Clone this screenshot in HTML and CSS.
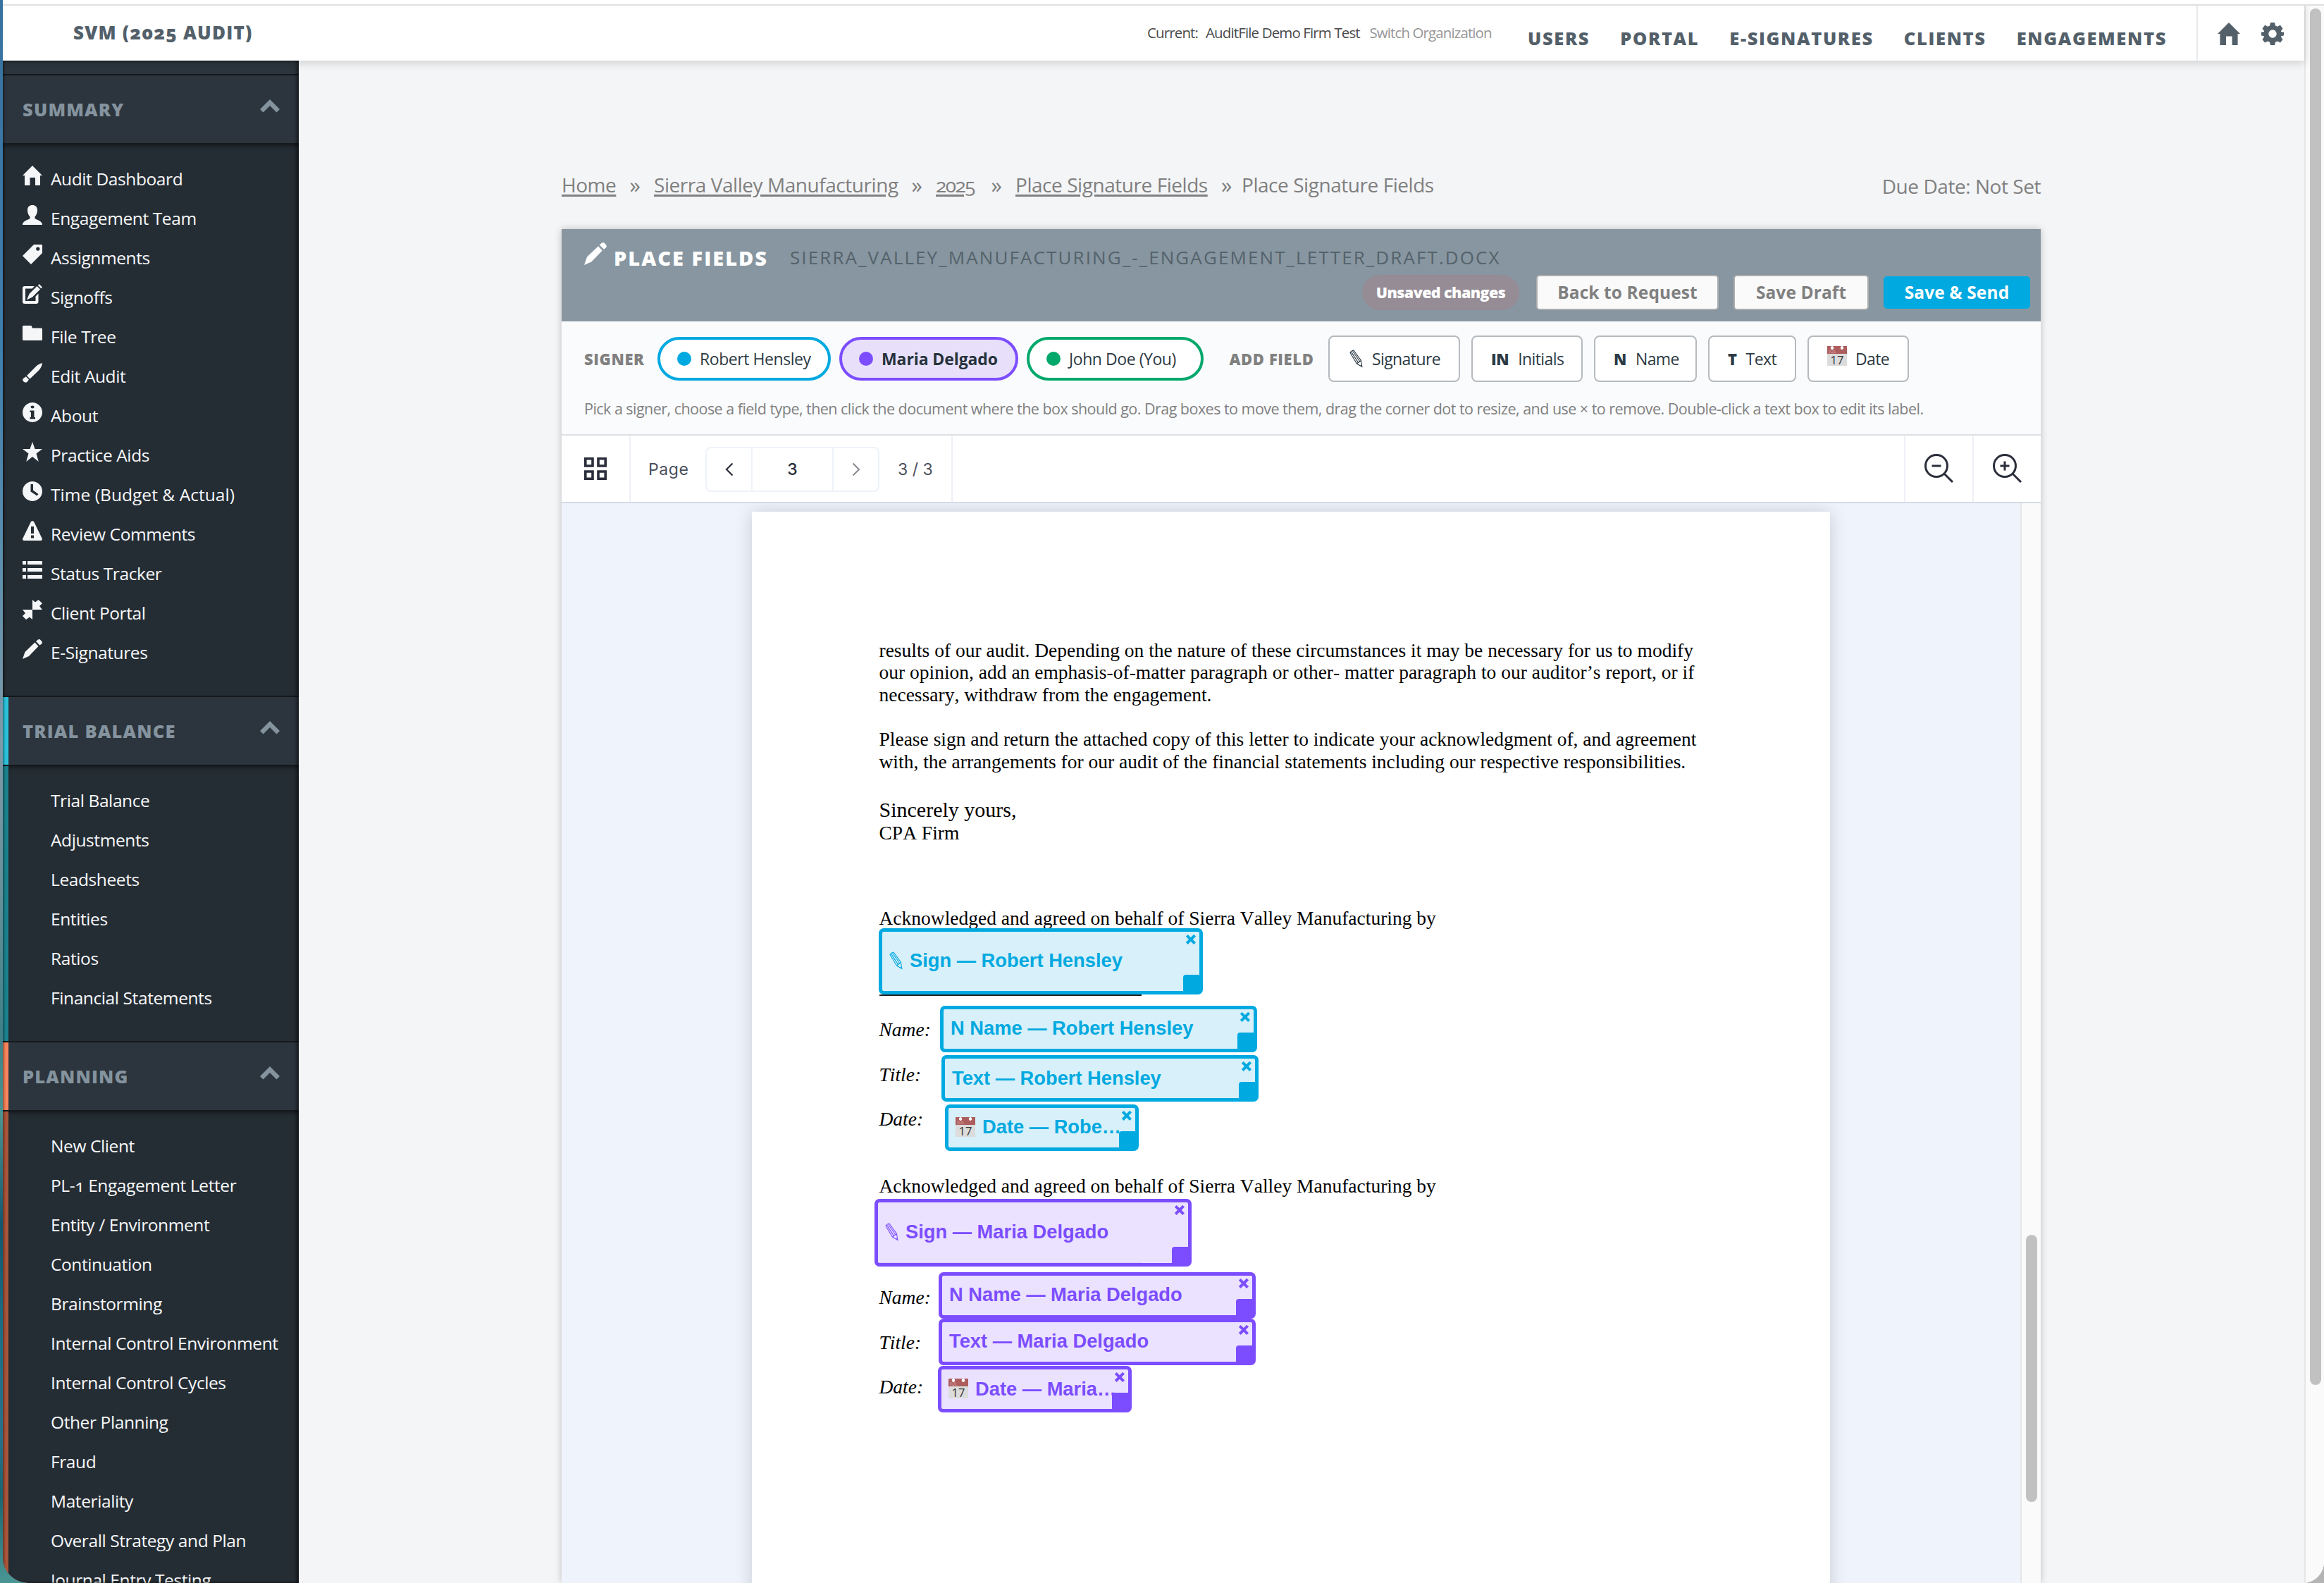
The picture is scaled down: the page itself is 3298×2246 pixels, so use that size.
FILE: index.html
```html
<!DOCTYPE html>
<html lang="en">
<head>
<meta charset="utf-8">
<title>Place Signature Fields</title>
<link rel="stylesheet" href="styles.css">
</head>
<body>
<svg class="defs" width="0" height="0">
  <symbol id="home" viewBox="0 0 28 28"><path d="M14 0 28 14H25V28H18V17H10.5V28H3V14H0Z"/></symbol>
  <symbol id="user" viewBox="0 0 28 28"><path d="M14 0c4 0 7 2.600 7 7 0 4-1.500 7.500-3.500 9.500v2.500c4 2.500 10.500 3.500 10.500 9H0c0-5.500 6.500-6.500 10.500-9v-2.500C8.500 14.500 7 11 7 7c0-4.400 3-7 7-7Z"/></symbol>
  <symbol id="tag" viewBox="0 0 28 28"><path fill-rule="evenodd" d="M16 0H27a1 1 0 0 1 1 1V12L12 28 0 16ZM21.800 3.400a2.700 2.700 0 1 0 .01 0Z"/></symbol>
  <symbol id="check" viewBox="0 0 28 28"><path d="M3 3H17L13.500 6.500H4V24H18.500V17.500L22.500 13.500V25a3 3 0 0 1-3 3H3a3 3 0 0 1-3-3V6A3 3 0 0 1 3 3Z"/><path d="M6 22.500 9.500 14 20.500 3 25 7.500 14 18.500ZM21.800 1.800 23.600 0 28 4.500 26.200 6.200Z"/></symbol>
  <symbol id="folder" viewBox="0 0 28 28"><path d="M1.500 3H12.500L14 6.500H26.500A1.500 1.500 0 0 1 28 8V22.500A1.500 1.500 0 0 1 26.500 24H1.500A1.500 1.500 0 0 1 0 22.500V4.500A1.500 1.500 0 0 1 1.500 3Z"/></symbol>
  <symbol id="brush" viewBox="0 0 28 28"><path d="M28 0C27.500 4 26 7 23.500 10L10.500 22.500 6 18 19 5C22 2 25 1 28 0ZM4.800 19.200 9 23.500 6.500 27Q4 28.500 1.500 26.500 -.5 24.500 .5 22.500Z"/></symbol>
  <symbol id="info" viewBox="0 0 28 28"><path fill-rule="evenodd" d="M14 0a14 14 0 1 0 .01 0ZM11.500 6q0-1.500 2.700-1.500T16.500 6.500q0 2-2.400 2T11.500 6ZM10.500 11.500H16.500V21H18V23.500H10.500V21H12V14H10.500Z"/></symbol>
  <symbol id="star" viewBox="0 0 28 28"><path d="M14 0 17.500 10H28L19.500 16.500 22.800 28 14 21 5.200 28 8.500 16.500 0 10H10.500Z"/></symbol>
  <symbol id="clock" viewBox="0 0 28 28"><path fill-rule="evenodd" d="M14 0a14 14 0 1 0 .01 0ZM11.500 4H15V12.500L22.500 18 20.500 20.500 11.500 14.500Z"/></symbol>
  <symbol id="warn" viewBox="0 0 28 28"><path fill-rule="evenodd" d="M14 0Q15.500 0 16.500 2L27.700 25Q28.500 28 26 28H2Q-.5 28 .3 25L11.500 2Q12.500 0 14 0ZM12 8V18H16V8ZM12 20.500V24.500H16V20.500Z"/></symbol>
  <symbol id="list" viewBox="0 0 28 28"><path d="M0 1H5V6H0ZM7 1H28V6H7ZM0 11H5V16H0ZM7 11H28V16H7ZM0 21H5V26H0ZM7 21H28V26H7Z"/></symbol>
  <symbol id="shrink" viewBox="0 0 28 28"><path d="M14 0 18 3.500 22.500 0 28 5 24 9 28 14H14ZM0 14H14V28L10 24.500 5 28 0 23 4 19Z"/></symbol>
  <symbol id="pencil" viewBox="0 0 28 28"><path d="M0 28 3.500 18 17.500 4.500 22.500 10 9 24ZM19 3 22 .5Q24-.7 26 1.500L27.500 3.500Q28.500 5 27 6.500L24.500 8.500Z"/></symbol>
  <symbol id="up" viewBox="0 0 28 19"><path d="M14 0 28 14 23.500 18.500 14 9 4.500 18.500 0 14Z"/></symbol>
  <symbol id="gear" viewBox="0 0 32 32"><path fill-rule="evenodd" d="M13 0H19L20 4.500 23 5.700 26.800 3.500 30.500 8.500 28 12V13L32 13.800V18.200L28 19.500V20.500L30.500 24 27 28.500 23 26.500 20 27.700 19 32H13L12 27.700 9 26.500 5 28.500 1.500 24 4 20.500V19.500L0 18.200V13.800L4 13V12L1.500 8.500 5.200 3.500 9 5.700 12 4.500ZM16 10.300a5.700 5.700 0 1 0 .01 0Z"/></symbol>
  <symbol id="outline-pencil" viewBox="0 0 20 26"><path d="M1 4.500Q2.500 1.500 6 1L16.500 15.500 17.800 24.500 10.500 20ZM2.800 3.600 12.600 18.600M4.600 2.200 14.700 16.800M10.500 20 16.500 15.500M15.800 23.200 17.500 21.800" fill="none" stroke="currentColor" stroke-width="1.100"/></symbol>
</svg>

<div class="window">
  <header class="topbar">
    <div class="brand">SVM (2025 AUDIT)</div>
    <div class="org"><span>Current:</span><span>AuditFile Demo Firm Test</span><a>Switch Organization</a></div>
    <nav class="nav"><a>USERS</a><a>PORTAL</a><a>E-SIGNATURES</a><a>CLIENTS</a><a>ENGAGEMENTS</a></nav>
    <div class="quick"><svg><use href="#home"/></svg><svg><use href="#gear"/></svg></div>
  </header>

  <div class="body">
    <aside class="sidebar">
      <div class="stub"></div>
      <section class="group">
        <h2>SUMMARY<svg><use href="#up"/></svg></h2>
        <ul class="icons">
          <li><svg><use href="#home"/></svg>Audit Dashboard</li>
          <li><svg><use href="#user"/></svg>Engagement Team</li>
          <li><svg><use href="#tag"/></svg>Assignments</li>
          <li><svg><use href="#check"/></svg>Signoffs</li>
          <li><svg><use href="#folder"/></svg>File Tree</li>
          <li><svg><use href="#brush"/></svg>Edit Audit</li>
          <li><svg><use href="#info"/></svg>About</li>
          <li><svg><use href="#star"/></svg>Practice Aids</li>
          <li class="wide"><svg><use href="#clock"/></svg>Time (Budget &amp; Actual)</li>
          <li><svg><use href="#warn"/></svg>Review Comments</li>
          <li><svg><use href="#list"/></svg>Status Tracker</li>
          <li><svg><use href="#shrink"/></svg>Client Portal</li>
          <li><svg><use href="#pencil"/></svg>E-Signatures</li>
        </ul>
      </section>
      <section class="group trial">
        <h2>TRIAL BALANCE<svg><use href="#up"/></svg></h2>
        <ul>
          <li>Trial Balance</li><li>Adjustments</li><li>Leadsheets</li><li>Entities</li><li>Ratios</li><li>Financial Statements</li>
        </ul>
      </section>
      <section class="group planning">
        <h2>PLANNING<svg><use href="#up"/></svg></h2>
        <ul>
          <li>New Client</li><li>PL-1 Engagement Letter</li><li>Entity / Environment</li><li>Continuation</li><li>Brainstorming</li><li>Internal Control Environment</li><li>Internal Control Cycles</li><li>Other Planning</li><li>Fraud</li><li>Materiality</li><li>Overall Strategy and Plan</li><li>Journal Entry Testing</li>
        </ul>
      </section>
    </aside>

    <main class="main">
      <div class="crumbs">
        <a class="c-home">Home</a><i>»</i><a class="c-org">Sierra Valley Manufacturing</a><i>»</i><a class="c-year">2025</a><i>»</i><a class="c-place">Place Signature Fields</a><i class="last">»</i><span>Place Signature Fields</span>
        <span class="due">Due Date: Not Set</span>
      </div>

      <div class="panel">
        <div class="phead">
          <div class="title"><svg><use href="#pencil"/></svg><h1>PLACE FIELDS</h1><span>SIERRA_VALLEY_MANUFACTURING_-_ENGAGEMENT_LETTER_DRAFT.DOCX</span></div>
          <div class="actions">
            <span class="unsaved">Unsaved changes</span>
            <button class="btn back">Back to Request</button>
            <button class="btn draft">Save Draft</button>
            <button class="btn send">Save &amp; Send</button>
          </div>
        </div>

        <div class="tools">
          <div class="row">
            <span class="label signer">SIGNER</span>
            <span class="pill robert"><b></b>Robert Hensley</span>
            <span class="pill maria"><b></b>Maria Delgado</span>
            <span class="pill john"><b></b>John Doe (You)</span>
            <span class="label add">ADD FIELD</span>
            <span class="add-btn f-sign"><svg class="pen"><use href="#outline-pencil"/></svg>Signature</span>
            <span class="add-btn f-init"><b>IN</b>Initials</span>
            <span class="add-btn f-name"><b>N</b>Name</span>
            <span class="add-btn f-text"><b>T</b>Text</span>
            <span class="add-btn f-date"><span class="cal"><small>JUL</small><big>17</big></span>Date</span>
          </div>
          <p class="help">Pick a signer, choose a field type, then click the document where the box should go. Drag boxes to move them, drag the corner dot to resize, and use × to remove. Double-click a text box to edit its label.</p>
        </div>

        <div class="viewbar">
          <div class="vb thumbs"><svg viewBox="0 0 32 32"><path d="M1.800 1.800H12V12H1.800ZM20 1.800H30.200V12H20ZM1.800 20H12V30.200H1.800ZM20 20H30.200V30.200H20Z"/></svg></div>
          <div class="vb pager">
            <span class="pg">Page</span>
            <div class="stepper">
              <span><svg viewBox="0 0 12 20"><path d="M10.500 1.500 2 10 10.500 18.500"/></svg></span><span class="cur">3</span><span class="off"><svg viewBox="0 0 12 20"><path d="M1.500 1.500 10 10 1.500 18.500"/></svg></span>
            </div>
            <span class="of">3 / 3</span>
          </div>
          <div class="vb zoom out"><svg viewBox="0 0 42 42"><path d="M32.500 17A15.500 15.500 0 1 1 1.500 17 15.500 15.500 0 1 1 32.500 17ZM28 28 40 40M10.500 17H23.500"/></svg></div>
          <div class="vb zoom"><svg viewBox="0 0 42 42"><path d="M32.500 17A15.500 15.500 0 1 1 1.500 17 15.500 15.500 0 1 1 32.500 17ZM28 28 40 40M10.500 17H23.500M17 10.500V23.500"/></svg></div>
        </div>

        <div class="viewer">
          <div class="paper">
            <p>results of our audit. Depending on the nature of these circumstances it may be necessary for us to modify<br>our opinion, add an emphasis-of-matter paragraph or other- matter paragraph to our auditor’s report, or if<br>necessary, withdraw from the engagement.</p>
            <p>Please sign and return the attached copy of this letter to indicate your acknowledgment of, and agreement<br>with, the arrangements for our audit of the financial statements including our respective responsibilities.</p>
            <p class="sincerely">Sincerely yours,</p>
            <p class="firm">CPA Firm</p>
            <div class="ack"><p>Acknowledged and agreed on behalf of Sierra Valley Manufacturing by</p><hr><em>Name:</em><em>Title:</em><em>Date:</em></div>
            <div class="ack"><p>Acknowledged and agreed on behalf of Sierra Valley Manufacturing by</p><hr><em>Name:</em><em>Title:</em><em>Date:</em></div>

            <div class="field r" style="left:180px;top:591px;width:460px;height:94px"><svg class="pen"><use href="#outline-pencil"/></svg><span>Sign — Robert Hensley</span><s></s><u></u></div>
            <div class="field r" style="left:267px;top:701px;width:450px;height:66px"><span>N Name — Robert Hensley</span><s></s><u></u></div>
            <div class="field r" style="left:269px;top:771px;width:450px;height:66px"><span class="low">Text — Robert Hensley</span><s></s><u></u></div>
            <div class="field r" style="left:274px;top:841px;width:275px;height:66px"><span class="cal"><small>JUL</small><big>17</big></span><span>Date — Robe…</span><s></s><u></u></div>
            <div class="field m" style="left:174px;top:975px;width:450px;height:96px"><svg class="pen"><use href="#outline-pencil"/></svg><span>Sign — Maria Delgado</span><s></s><u></u></div>
            <div class="field m" style="left:265px;top:1079px;width:450px;height:66px"><span>N Name — Maria Delgado</span><s></s><u></u></div>
            <div class="field m" style="left:265px;top:1145px;width:450px;height:66px"><span>Text — Maria Delgado</span><s></s><u></u></div>
            <div class="field m" style="left:264px;top:1212px;width:275px;height:66px"><span class="cal"><small>JUL</small><big>17</big></span><span class="low">Date — Maria…</span><s></s><u></u></div>
          </div>
          <div class="track inner"><i></i></div>
        </div>
      </div>
    </main>
  </div>
  <div class="track outer"><i></i></div>
</div>
</body>
</html>
```
FILE: styles.css
```css
*{box-sizing:border-box;margin:0;padding:0}
html,body{width:3298px;height:2246px;overflow:hidden}
body{
  font-family:"Open Sans","Noto Sans",sans-serif;
  font-variant-numeric:oldstyle-nums;
  background:
    linear-gradient(#b4b4b4,#b4b4b4) right/60px 100% no-repeat,
    linear-gradient(#37719f 0,#3f7fae 500px,#5d8fae 800px,#7f9aa8 1050px,#6a929b 1250px,#3f8088 1470px,#4b9490 1580px,#12566f 1740px,#1d6f88 1900px,#2a6f8c 2040px,#1c6470 2120px,#4a9694 2246px);
}
.defs{position:absolute}
svg{display:block;flex:none;fill:currentColor}
a{color:inherit}
ul{list-style:none}

.window{
  margin-left:4px;width:3294px;height:2246px;overflow:hidden;
  background:#f4f5f7;border-radius:0 0 30px 36px;
  display:grid;grid-template-columns:3266px 28px;grid-template-rows:86px 2160px;
}

/* top bar */
.topbar{
  grid-column:1;background:#fff;margin-top:4px;border-top:2px solid #e0e0e0;
  display:flex;align-items:center;position:relative;z-index:3;color:#53606a;
  box-shadow:0 3px 12px rgba(0,0,0,.16);white-space:nowrap
}
.window::before{content:"";position:absolute;left:4px;top:0;width:3294px;height:6px;background:#fff;border-bottom:2px solid #e0e0e0;z-index:5}
.brand{width:1624px;flex:none;padding-left:100px;font-weight:900;font-size:26px;letter-spacing:1.2px}
.org{display:flex;flex:none;font-size:20.5px;letter-spacing:-.87px;color:#4a4a4a;width:540px}
.org span:first-child{width:83px}
.org span:nth-child(2){width:232.5px}
.org a{color:#969696;letter-spacing:-.9px}
.nav{display:flex;flex:1;padding-top:16px;gap:43px;font-weight:800;font-size:25.5px;letter-spacing:1.65px}
.quick{width:153px;height:80px;border-left:2px solid #e8e9eb;display:flex;align-items:center;gap:30px;padding:4px 0 0 28px}
.quick svg{width:32px;height:32px}

.body{grid-row:2;display:flex;height:2160px}

/* sidebar */
.sidebar{
  width:420px;flex:none;background:#252d34;color:#fff;overflow:hidden;position:relative;
}
.sidebar::after{content:"";position:absolute;inset:0;box-shadow:inset -3px 0 5px rgba(0,0,0,.55),inset 2px 0 3px rgba(0,0,0,.35)}
.stub{height:21px;background:#2c353d;border-bottom:2px solid #14191d}
.group h2{
  height:98px;background:#2c353d;border-bottom:2px solid #14191d;
  display:flex;align-items:center;justify-content:space-between;padding:0 27px 0 28px;
  font-size:25.5px;font-weight:800;letter-spacing:1.2px;color:#84939e
}
.group h2 svg{width:28px;height:19px;margin-bottom:9px}
.group ul{padding:20px 0 34px 68px;font-size:24.5px;letter-spacing:-.4px;box-shadow:inset 0 4px 6px -2px rgba(0,0,0,.5)}
.group li{height:56px;display:flex;align-items:center;white-space:nowrap;color:#f7f8fa}
.group .icons{padding-left:28px}
.group .wide{letter-spacing:.05px}
.icons svg{width:28px;height:28px;margin:0 12px 9px 0;color:#f4f6f8}
.trial,.planning{border-top:2px solid #14191d}
.trial h2{box-shadow:inset 8px 0 #2bc3db}
.trial ul{border-left:8px solid #1b818e;padding-left:60px}
.planning h2{box-shadow:inset 8px 0 #f9855c}
.planning ul{border-left:8px solid #a8563b;padding-left:60px}

/* content */
.main{flex:1;padding:156px 0 0 373px}
.crumbs{width:2099px;height:40px;display:flex;align-items:center;font-size:28px;color:#808080;white-space:nowrap;letter-spacing:-.45px}
.crumbs a{flex:none;text-decoration:underline;text-decoration-thickness:2.5px;text-underline-offset:3px}
.crumbs i{flex:none;font-style:normal;width:54px;text-align:center;font-size:31px}
.crumbs i.last{width:47px;text-align:left;padding-left:18px}
.c-home{width:77px}
.c-org{width:346px}
.c-year{width:59px;letter-spacing:-1.5px}
.c-place{width:274px}
.due{margin-left:auto;padding-top:4px}

.panel{width:2099px;margin-top:43px;background:#fff;box-shadow:0 0 10px rgba(0,0,0,.22);white-space:nowrap}
.phead{height:131px;background:#8796a0;padding:20px 15px 0 32px}
.title{height:40px;display:flex;align-items:center;color:#fff}
.title svg{width:32px;height:32px;margin:0 10px 10px 0}
.title h1{width:250px;font-size:29px;font-weight:800;letter-spacing:2px}
.title span{font-size:26px;letter-spacing:2.1px;color:#55626b}
.actions{display:flex;justify-content:flex-end;align-items:center;margin-top:4px;height:51px}
.unsaved{width:223px;height:50px;border-radius:25px;background:#958c95;color:#fff;font-size:21.5px;font-weight:800;letter-spacing:-.59px;line-height:50px;text-align:center;margin-right:24px}
.btn{height:50px;border:2px solid #adadad;border-radius:5px;background:#fafafa;color:#808080;font:700 24.5px "Open Sans",sans-serif;letter-spacing:.1px}
.back{width:259px;margin-right:21px}
.draft{width:192px;margin-right:21px}
.send{width:208px;height:46px;border:0;background:#00a9e0;color:#fff}

.tools{height:162px;background:#fafbfd;border-bottom:2px solid #dddfe2;padding:20px 32px 0}
.row{display:flex;align-items:center;height:66px}
.label{font-size:22px;font-weight:800;letter-spacing:.6px;color:#808080}
.signer{width:104px}
.add{width:140.5px;margin-left:36.5px}
.pill{height:62px;border:4px solid;border-radius:31px;background:#fff;display:flex;align-items:center;padding-left:24px;font-size:23px;letter-spacing:-.44px;margin-right:12px}
.pill b{width:20px;height:20px;border-radius:50%;margin-right:12px}
.robert{width:246px;border-color:#00a9e0;color:#2c3a44}
.robert b{background:#00a9e0}
.maria{width:254px;border-color:#7c4dff;background:#e8e0fb;color:#26323b;font-weight:700;letter-spacing:-.1px}
.maria b{background:#7c4dff}
.john{width:251px;border-color:#00a86b;color:#2c3a44;margin-right:0}
.john b{background:#00a86b}
.add-btn{height:66px;border:2px solid #b5babf;border-radius:8px;background:#fff;display:flex;align-items:center;padding-left:26px;font-size:23px;letter-spacing:-.6px;color:#2c3a44;margin-right:16px}
.add-btn b{font-weight:800;margin-right:13px;font-size:22px;letter-spacing:-.4px}
.add-btn .pen{width:20px;height:26px;margin:0 12px 0 2px}
.f-sign{width:187px}.f-init{width:158px}.f-name{width:146px}.f-text{width:125px}.f-date{width:144px}
.help{margin-top:20px;line-height:36px;font-size:21.5px;letter-spacing:-.53px;color:#808080}

/* calendar glyph */
.cal{width:28px;height:28px;flex:none;background:radial-gradient(circle at 7px 2.5px,#fff 2px,transparent 2.6px),radial-gradient(circle at 21px 2.5px,#fff 2px,transparent 2.6px),linear-gradient(#ad5d5d 11px,#dcdcdc 11px);display:flex;flex-direction:column;letter-spacing:0;font-family:"Open Sans",sans-serif;font-weight:400}
.cal small{height:11px;font-size:7px;line-height:15px;padding-left:2px;color:#d9a5a5}
.cal big{height:17px;font-size:16.5px;line-height:17px;text-align:center;color:#333;font-variant-numeric:lining-nums}
.add-btn .cal{margin:-8px 12px 0 0}

/* viewer toolbar */
.viewbar{height:96px;border-bottom:2px solid #d4dbe5;display:flex;font-family:Inter,sans-serif;font-variant-numeric:normal;font-size:23px;color:#4a4f5c}
.vb{display:flex;align-items:center;border-right:2px solid #eef0f8}
.vb path{fill:none;stroke:#2b2e3b;stroke-width:3}
.thumbs{width:98px;padding-left:32px}
.thumbs svg{width:32px;height:32px}
.thumbs path{stroke-width:3.6}
.pager{width:457px;padding:1px 0 0 25px}
.pg{width:81px;letter-spacing:.6px}
.stepper{width:247px;height:64px;border:2px solid #eef2f9;border-radius:8px;display:grid;grid-template-columns:63px 117px 1fr}
.stepper span{display:flex;align-items:center;justify-content:center}
.stepper svg{width:12px;height:20px}
.stepper path{stroke-width:2.2}
.cur{border:solid #eef2f9;border-width:0 2px;color:#2b2e3b;font-weight:500}
.off path{stroke:#8d8f96}
.of{padding-left:26px}
.zoom{width:95px;justify-content:center;border:0}
.zoom svg{width:42px;height:42px}
.out{margin-left:auto;width:99px;border:solid #eef0f8;border-width:0 2px}

/* document */
.viewer{display:flex;justify-content:space-between;height:1532px;background:#eff3fc;padding-left:270px;overflow:hidden}
.paper{position:relative;width:1530px;height:1560px;margin-top:12px;background:#fff;padding:180.5px 0 0 180.5px;box-shadow:0 0 24px rgba(0,0,0,.16);font:27.5px/31.7px "Liberation Serif",serif;font-kerning:none;color:#000}
.paper>p{margin-bottom:31.7px}
.paper .sincerely{font-size:30px;line-height:34px;margin:34.8px 0 0}
.paper .firm{margin-bottom:89.6px}
.ack{height:380px;display:flex;flex-direction:column}
.ack hr{width:372px;height:2px;border:0;background:#222;margin:92.8px 0 32.2px}
.ack em{margin-bottom:31.7px}
.field{position:absolute;border:5px solid;border-radius:7px;display:flex;align-items:center;padding:0 0 3px 10px;font:700 27.3px "Liberation Sans",sans-serif}
.r{border-color:#00a9e0;color:#00a9e0;background:rgba(214,240,250,.97)}
.m{border-color:#7c4dff;color:#7c4dff;background:rgba(232,224,255,.93)}
.field .low{padding-top:3px}
.field .pen{width:20px;height:26px;margin:0 9px 0 0}
.field .cal{margin-right:10px}
.field s,.field s::after{position:absolute;width:16px;height:3.8px;background:currentColor;transform:rotate(45deg)}
.field s{right:4px;top:9px}
.field s::after{content:"";inset:0;transform:rotate(90deg)}
.field u{position:absolute;right:-1px;bottom:-1px;width:24px;height:24px;background:currentColor;border-radius:4px 0 0 0}

.track{background:#fafafa;border-left:2px solid #e6e6e6}
.track i{display:block;width:16px;border-radius:8px;background:#c1c1c1;margin-left:6px}
.inner{width:29px;padding-top:1038px}
.inner i{height:379px}
.outer{grid-column:2;grid-row:1/3;padding-top:12px}
.outer i{height:1953px}
```
